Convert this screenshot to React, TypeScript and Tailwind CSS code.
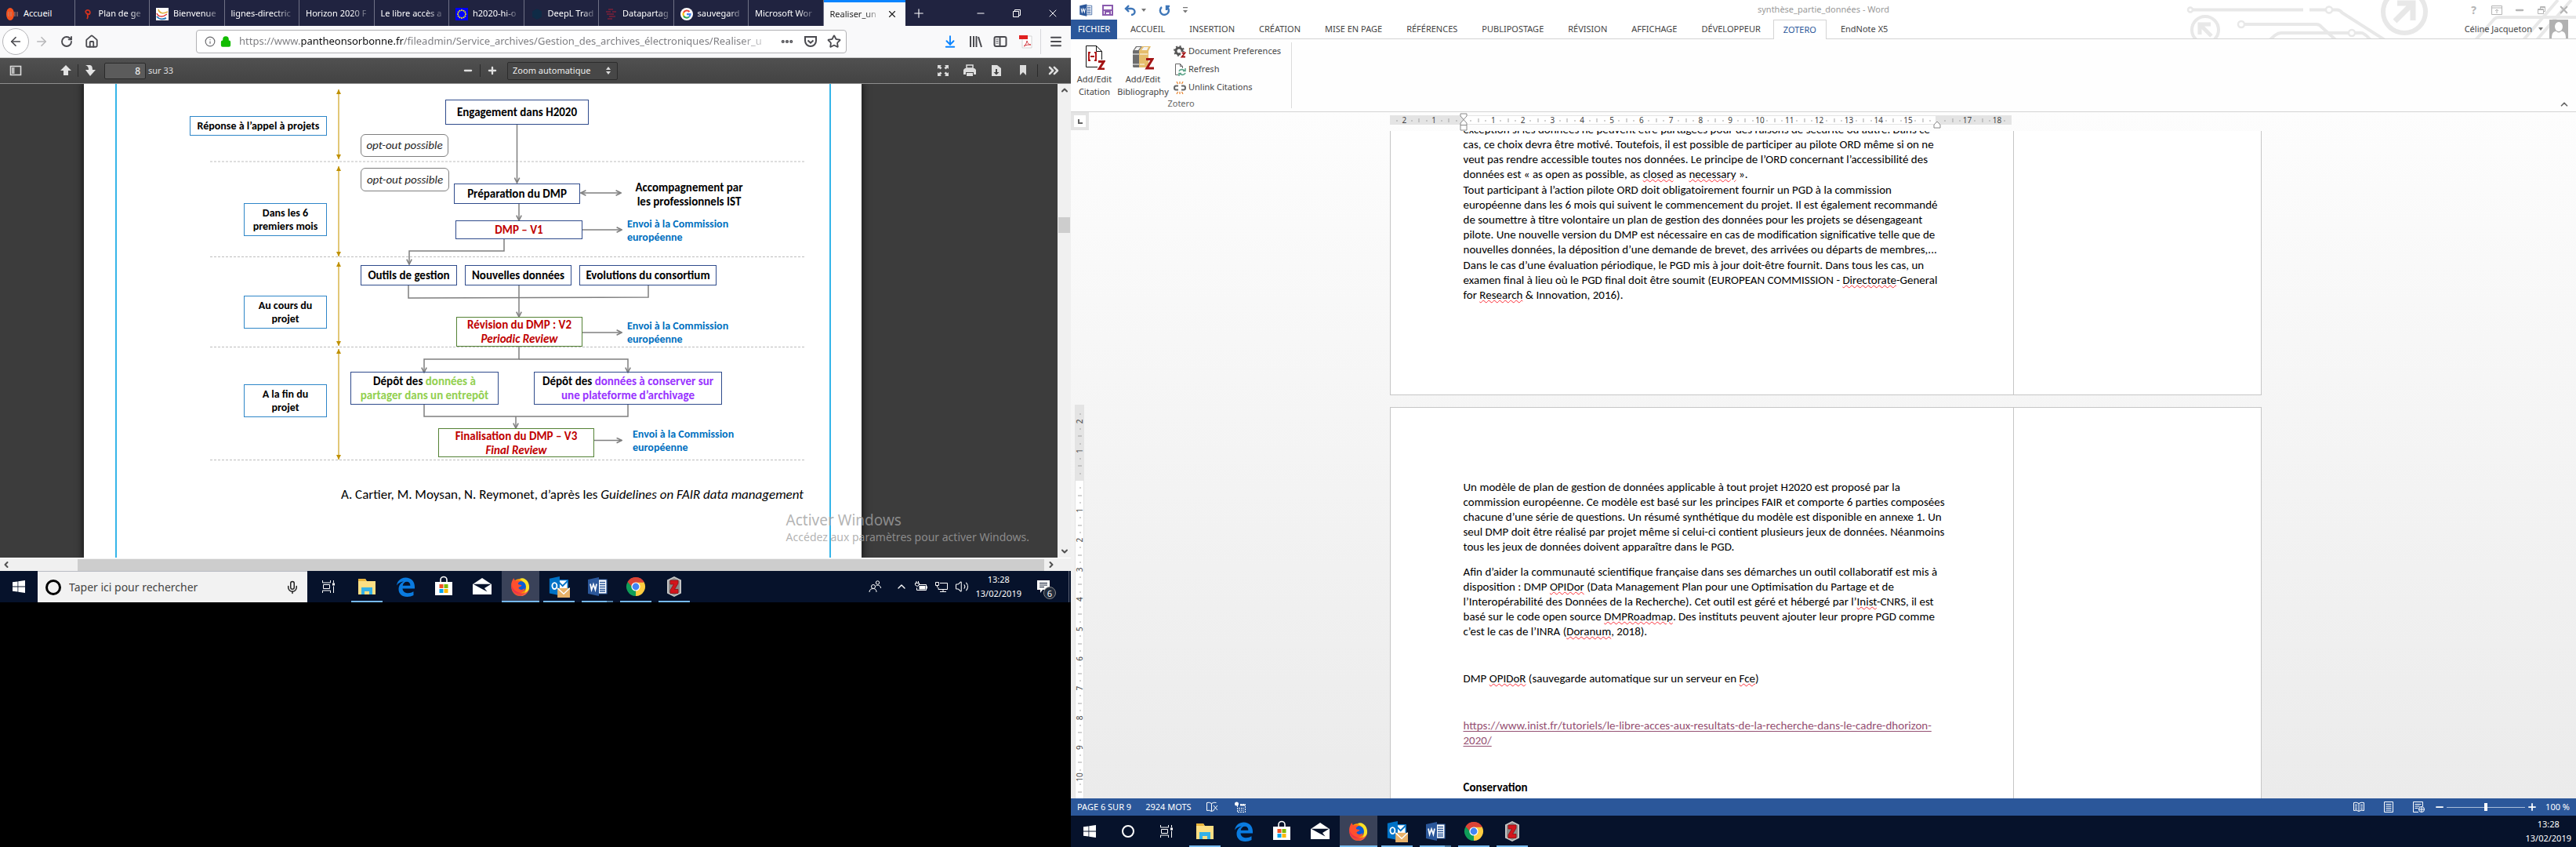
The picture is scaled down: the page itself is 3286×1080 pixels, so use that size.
import React from "react";
import {
  ArrowLeft, ArrowRight, RotateCw, Home, Info, Lock, Star, ArrowDownToLine, Menu, Plus, X, Minus, Copy,
  ChevronUp, ChevronDown, ChevronLeft, ChevronRight, ChevronsRight, Volume2, MoreHorizontal, Mic,
} from "lucide-react";

type Kids = { children?: React.ReactNode };

/* ---------- application logos ---------- */

function WordLogo({ className = "size-7" }: { className?: string }) {
  return (
    <svg viewBox="0 0 28 28" className={className} aria-hidden="true">
      <path d="M15 5h11v18H15z" fill="#fff" stroke="#2b579a" strokeWidth="1.2" />
      <path d="M17 8.500h7M17 11.500h7M17 14.500h7M17 17.500h7M17 20h7" stroke="#2b579a" strokeWidth="1.3" />
      <path d="M2 5l14-3v24L2 23z" fill="#2b579a" />
      <path d="M5 10.500l1.600 7.500 2.400-7 2.400 7 1.600-7.500" fill="none" stroke="#fff" strokeWidth="1.700" />
    </svg>
  );
}
function OutlookLogo() {
  return (
    <svg viewBox="0 0 30 30" className="size-7" aria-hidden="true">
      <path d="M14 6h13v14H14z" fill="#fff" stroke="#0072c6" strokeWidth="1.500" />
      <path d="M15 9l5 5 7-7" fill="none" stroke="#0072c6" strokeWidth="2" />
      <path d="M2 4l14-3v26L2 24z" fill="#0072c6" />
      <ellipse cx="9" cy="14" rx="3.200" ry="4.200" fill="none" stroke="#fff" strokeWidth="2" />
      <path d="M13 17h17v13H13z" fill="#e8b26a" />
      <path d="M13 17l8.500 8 8.500-8" fill="none" stroke="#fff" strokeWidth="1.500" />
    </svg>
  );
}
function ExplorerLogo() {
  return (
    <svg viewBox="0 0 28 28" className="size-7" aria-hidden="true">
      <path d="M3 4h9l2 3h11v17H3z" fill="#fddf83" />
      <path d="M3 4h9l1 3H3z" fill="#e9b53c" />
      <path d="M7 24v-9h14v9h-4v-4h-6v4z" fill="#35b1e8" />
    </svg>
  );
}
function EdgeLogo() {
  return (
    <svg viewBox="0 0 28 28" className="size-7" aria-hidden="true">
      <path
        d="M3 12.500C4 6 9 2.500 14.500 2.500 21.500 2.500 26 7.500 26 14v2.500H10.500c.3 4 3.500 5.800 7.300 5.800 2.500 0 4.700-.7 6.700-2v4.700c-2.200 1.300-5 2-8 2C9.500 27 5.500 23 5.500 17.300c0-4.800 2.800-8.300 6.500-9.800-3.800.2-7 2-9 5zm7.700.3h9.700c0-3-1.500-5-4.400-5-2.800 0-4.800 2-5.300 5z"
        fill="#0a7be0"
      />
    </svg>
  );
}
function StoreLogo() {
  return (
    <svg viewBox="0 0 28 28" className="size-7" aria-hidden="true">
      <path d="M10 9V5.500a4 4 0 0 1 8 0V9" fill="none" stroke="#fff" strokeWidth="1.600" />
      <path d="M3 8h22v17H3z" fill="#fff" />
      <path d="M8.500 11h5v5h-5z" fill="#f25022" />
      <path d="M14.500 11h5v5h-5z" fill="#7fba00" />
      <path d="M8.500 17h5v5h-5z" fill="#00a4ef" />
      <path d="M14.500 17h5v5h-5z" fill="#ffb900" />
    </svg>
  );
}
function MailLogo() {
  return (
    <svg viewBox="0 0 28 28" className="size-7" aria-hidden="true">
      <path d="M2 11l12-8 12 8v13H2z" fill="#fff" />
      <path d="M2.500 10.700h23L17 16l3.500 4.500L12 16z" fill="#06122b" />
    </svg>
  );
}
function FirefoxLogo() {
  return (
    <svg viewBox="0 0 28 28" className="size-7" aria-hidden="true">
      <circle cx="13.500" cy="15" r="11" fill="#ff9400" />
      <path d="M13 4c7-3 13 5 12 12-1 6-6 10-11 10 7-3 8-9 6-14-1-4-5-6-7-8z" fill="#ffe226" />
      <circle cx="14" cy="14" r="7" fill="#0a5bd6" />
      <path d="M2.500 9c1-3 2-5 3-6 0 2 1 3 3 3.500 2-.5 4 0 5 1-2 1-3 2-2.500 3.500 1.500 1 4 .5 4.500 1.500-1 2-4 1.500-4 3.500 2 3 6 2 8 0-1 5-5 7-9 6.500C4 22 1 15 2.500 9z" fill="#ff4f2e" />
      <path d="M2.300 12c-1 8 5 14 12 14 5 0 9-3 10.500-8-3 4-8 5.500-13 3.500S4 17 2.300 12z" fill="#e31f5b" opacity=".65" />
    </svg>
  );
}
function ChromeLogo() {
  return (
    <svg viewBox="0 0 28 28" className="size-7" aria-hidden="true">
      <path d="M14 14L3.600 8A12 12 0 0 1 24.400 8z" fill="#db4437" />
      <path d="M14 14L24.400 8A12 12 0 0 1 14 26z" fill="#ffcd40" />
      <path d="M14 14v12A12 12 0 0 1 3.600 8z" fill="#0f9d58" />
      <path d="M14 8.500h10.700L19 17z" fill="#ffcd40" />
      <path d="M14 8.500H3.900L9 17z" fill="#0f9d58" />
      <path d="M3.600 8L9 14l5-5.500h10.700A12 12 0 0 0 3.600 8z" fill="#db4437" />
      <circle cx="14" cy="14" r="5.600" fill="#fff" />
      <circle cx="14" cy="14" r="4.400" fill="#4285f4" />
    </svg>
  );
}
function ZoteroLogo() {
  return (
    <svg viewBox="0 0 28 28" className="size-7" aria-hidden="true">
      <path d="M14 1l9 4.500v17L14 27l-9-4.500v-17z" fill="#c4c4c4" />
      <path d="M14 3l7 3.500v15L14 25l-7-3.500v-15z" fill="#8a8a8a" />
      <path d="M9 6h10v4l-4.500 7.500H19v5H9v-4l4.500-7.500H9z" fill="#d3151d" stroke="#8f0c12" strokeWidth=".8" />
    </svg>
  );
}
function WindowsLogo() {
  return (
    <svg viewBox="0 0 16 16" className="size-4" aria-hidden="true">
      <path d="M0 2.300L6.500 1.400V7.500H0zM7.300 1.300L16 0v7.500H7.300zM0 8.400h6.500v6.200L0 13.700zM7.300 8.400H16V16l-8.700-1.200z" fill="#fff" />
    </svg>
  );
}
function TaskViewIcon() {
  return (
    <svg viewBox="0 0 18 18" className="size-[18px]" fill="none" stroke="#fff" aria-hidden="true">
      <path d="M1.500 1v3h10V1M1.500 17v-3h10v3M2.500 6.500h8v5h-8zM15.500 1v3M15.500 8.500V17" />
      <path d="M14 4.500h3v3h-3z" fill="#fff" stroke="none" />
    </svg>
  );
}

/* ---------- taskbar ---------- */

function TaskButton({ label, children, state = "idle" }: Kids & { label: string; state?: "idle" | "open" | "active" | "stack" }) {
  return (
    <button
      type="button"
      aria-label={label}
      className={`relative flex h-10 w-12 shrink-0 items-center justify-center ${state === "active" ? "bg-[#3a4259]" : ""}`}
    >
      {children}
      {state !== "idle" && (
        <span
          className={`absolute bottom-0 h-0.5 bg-[#76b9ed] ${state === "active" ? "inset-x-0" : "inset-x-1"} ${state === "stack" ? "border-r-8 border-[#4f7ea5]" : ""}`}
        />
      )}
    </button>
  );
}
function Apps() {
  return (
    <>
      <TaskButton label="Vue des tâches"><TaskViewIcon /></TaskButton>
      <TaskButton label="Explorateur de fichiers" state="open"><ExplorerLogo /></TaskButton>
      <TaskButton label="Microsoft Edge"><EdgeLogo /></TaskButton>
      <TaskButton label="Microsoft Store"><StoreLogo /></TaskButton>
      <TaskButton label="Courrier"><MailLogo /></TaskButton>
      <TaskButton label="Firefox" state="active"><FirefoxLogo /></TaskButton>
      <TaskButton label="Outlook" state="open"><OutlookLogo /></TaskButton>
      <TaskButton label="Word" state="stack"><WordLogo /></TaskButton>
      <TaskButton label="Google Chrome" state="open"><ChromeLogo /></TaskButton>
      <TaskButton label="Zotero" state="open"><ZoteroLogo /></TaskButton>
    </>
  );
}
function Clock() {
  return (
    <div className="text-center text-[11px] leading-[18px] text-white">
      <div>13:28</div>
      <div>13/02/2019</div>
    </div>
  );
}
function BrowserTaskbar() {
  return (
    <footer className="flex h-10 items-center gap-px bg-[#06122b]">
      <button type="button" aria-label="Démarrer" className="flex h-10 w-12 items-center justify-center"><WindowsLogo /></button>
      <label className="-ml-px flex h-10 w-[344px] items-center gap-2.5 border-t border-[#b9bcc4] bg-[#f2f2f2] px-2.5">
        <span className="size-5 rounded-full border-[3px] border-black" />
        <input
          type="text"
          aria-label="Rechercher"
          placeholder="Taper ici pour rechercher"
          className="min-w-0 flex-1 bg-transparent text-sm text-[#333] outline-none placeholder:text-[#444]"
        />
        <Mic className="size-[18px] text-[#222]" strokeWidth={2} />
      </label>
      <span className="w-px" />
      <Apps />
      <div className="ml-auto flex items-center gap-2 text-white">
        <svg viewBox="0 0 16 16" className="size-4" fill="none" stroke="#fff" aria-hidden="true">
          <circle cx="6" cy="8" r="2.500" /><path d="M1 15c0-3 2-4.500 5-4.500s4 2 4 4.500" /><circle cx="11.500" cy="3" r="2.200" /><path d="M9.500 7c3-2 6 0 6 3" />
        </svg>
        <ChevronUp className="ml-2.5 size-4" strokeWidth={2} />
        <svg viewBox="0 0 18 16" className="h-4 w-[18px]" fill="none" stroke="#fff" aria-hidden="true">
          <path d="M5.500 5.500h10v7h-12v-3M16.500 7.500v3M1.500 3.500h5v2.500l-2.500 1.500-2.500-1.500zM3 3.500V1M5.500 3.500V1" /><path d="M6.500 7h8v4.500h-8z" fill="#fff" stroke="none" />
        </svg>
        <svg viewBox="0 0 18 16" className="h-4 w-[18px]" fill="none" stroke="#fff" aria-hidden="true">
          <path d="M7 3.500h9.500v8H5V9M11 11.500v3M7 14.500h8M1.500 2.500h4v4h-4zM3.500 6.500V9" />
        </svg>
        <Volume2 className="size-[18px]" strokeWidth={1.4} />
        <Clock />
        <button type="button" aria-label="6 notifications" className="relative mr-1 h-10 w-10">
          <svg viewBox="0 0 20 20" className="ml-2.5 size-5" aria-hidden="true">
            <path d="M2 2h16v12H9l-3 4v-4H2z" fill="#fff" /><path d="M5 5.500h10M5 8h10M5 10.500h6" stroke="#06122b" />
          </svg>
          <span className="absolute right-1 bottom-1 flex size-4 items-center justify-center rounded-full border border-[#888] bg-[#222c3c] text-[11px] leading-none text-white">6</span>
        </button>
        <span className="h-10 w-[3px] border-l border-[#5b6374]" />
      </div>
    </footer>
  );
}
function WordTaskbar() {
  return (
    <footer className="flex h-10 items-center gap-px bg-[#06122b]">
      <button type="button" aria-label="Démarrer" className="flex h-10 w-12 items-center justify-center"><WindowsLogo /></button>
      <TaskButton label="Cortana"><span className="size-4 rounded-full border-2 border-white" /></TaskButton>
      <Apps />
      <div className="mr-1.5 ml-auto"><Clock /></div>
    </footer>
  );
}

/* ---------- browser ---------- */

const euStars = Array.from({ length: 12 }, (_, i) => [8 + 5 * Math.cos((i * Math.PI) / 6), 8 + 5 * Math.sin((i * Math.PI) / 6)]);

const tabs: { name: string; icon?: React.ReactNode }[] = [
  { name: "Accueil", icon: <svg viewBox="0 0 16 16"><ellipse cx="5" cy="8" rx="5" ry="8" fill="#f4511e" /><path d="M3 5v6M6 5v6M11 5v6M14 5v6" stroke="#b98a7a" /></svg> },
  { name: "Plan de ge", icon: <svg viewBox="0 0 16 16" fill="none" stroke="#d3321d" strokeWidth="1.800"><path d="M7 14c2-3 1-5 0-7M5 5a3 3 0 1 1 5 3c-2 0-4 0-5-3" /></svg> },
  { name: "Bienvenue", icon: <svg viewBox="0 0 16 16"><path d="M0 0h16v16H0z" fill="#fff" /><path d="M3 2c1 5 6 6 12 3" fill="none" stroke="#e0b13a" strokeWidth="1.500" /><path d="M1 7c2 5 8 5 13 1" fill="none" stroke="#d33" strokeWidth="1.500" /><path d="M1 11c3 4 8 4 12 2" fill="none" stroke="#2b7bb9" strokeWidth="2" /></svg> },
  { name: "lignes-directric" },
  { name: "Horizon 2020 F" },
  { name: "Le libre accès a" },
  { name: "h2020-hi-o", icon: <svg viewBox="0 0 16 16"><path d="M0 0h16v16H0z" fill="#00f" />{euStars.map(([x, y], i) => <circle key={i} cx={x} cy={y} r="1" fill="#ff0" />)}</svg> },
  { name: "DeepL Trad", icon: <svg viewBox="0 0 16 16"><path d="M8 1l6 3.500v7L8 15l-6-3.500v-7z" fill="#0f2b46" /></svg> },
  { name: "Datapartag", icon: <svg viewBox="0 0 16 16" stroke="#7c2038" strokeWidth="1.500"><path d="M4 2h6M1 5h6M9 5h5M2 8h9M5 11h8M3 14h6" /></svg> },
  { name: "sauvegard", icon: <svg viewBox="0 0 16 16"><circle cx="8" cy="8" r="8" fill="#fff" /><g fill="none" strokeWidth="2.200"><path d="M11.500 5A4.600 4.600 0 0 0 4 6" stroke="#ea4335" /><path d="M4 6a4.600 4.600 0 0 0 0 4.200" stroke="#fbbc05" /><path d="M4 10.200a4.600 4.600 0 0 0 7 1.300" stroke="#34a853" /><path d="M11 11.500a4.600 4.600 0 0 0 1.500-3.300H8" stroke="#4285f4" /></g></svg> },
  { name: "Microsoft Wor" },
];

function TabStrip() {
  return (
    <div className="flex h-[33px] bg-[#202340] text-[11px] text-white">
      <div className="flex w-[1155px] shrink" role="tablist">
        {tabs.map((t) => (
          <button key={t.name} type="button" role="tab" aria-selected="false" className="flex min-w-0 flex-1 basis-0 items-center gap-1.5 border-r border-[#6f7185] pt-0.5 pl-2 text-left">
            {t.icon && <span className="size-4 shrink-0">{t.icon}</span>}
            <span className={`whitespace-nowrap ${t.name === "Accueil" ? "" : "[mask-image:linear-gradient(to_right,black_75%,#0004)]"}`}>{t.name}</span>
          </button>
        ))}
        <div role="tab" aria-selected="true" className="flex min-w-0 flex-1 basis-0 items-center justify-between border-t-[3px] border-[#0a84ff] bg-[#f9f9fa] pr-2.5 pl-2 text-[#222]">
          <span className="whitespace-nowrap [mask-image:linear-gradient(to_right,black_75%,#0004)]">Realiser_un</span>
          <button type="button" aria-label="Fermer l’onglet"><X className="size-3.5" strokeWidth={2} /></button>
        </div>
      </div>
      <button type="button" aria-label="Nouvel onglet" className="px-2"><Plus className="size-[18px]" strokeWidth={1.5} /></button>
      <div className="ml-auto flex">
        <button type="button" aria-label="Réduire" className="flex w-[46px] items-center justify-center"><Minus className="size-3.5" strokeWidth={2} /></button>
        <button type="button" aria-label="Restaurer" className="flex w-[46px] items-center justify-center">
          <svg viewBox="0 0 10 10" className="size-2.5" fill="none" stroke="#fff"><path d="M.5 2.500h7v7h-7zM2.500 2.500v-2h7v7h-2" /></svg>
        </button>
        <button type="button" aria-label="Fermer" className="flex w-[46px] items-center justify-center"><X className="size-4" strokeWidth={1.5} /></button>
      </div>
    </div>
  );
}

function AddressBar() {
  return (
    <div className="flex h-[41px] items-center border-b border-[#ccc] bg-[#f9f9fa] pr-2.5 pl-[3px] text-[#4a4a4f]">
      <button type="button" aria-label="Page précédente" className="flex size-[34px] items-center justify-center rounded-full border border-[#b5b5b8] bg-white"><ArrowLeft className="size-[18px]" strokeWidth={2.3} /></button>
      <button type="button" aria-label="Page suivante" className="ml-1.5 flex w-5 justify-center text-[#b8b8ba]"><ArrowRight className="size-[18px]" strokeWidth={2.2} /></button>
      <button type="button" aria-label="Actualiser" className="ml-3 flex w-5 justify-center"><RotateCw className="size-4" strokeWidth={2.8} /></button>
      <button type="button" aria-label="Accueil" className="ml-3 flex w-5 justify-center"><Home className="size-[18px]" strokeWidth={2.4} /></button>
      <div className="relative ml-[123px] flex h-[30px] min-w-0 flex-1 items-center gap-1.5 rounded-sm border border-[#b1b1b4] bg-white px-2.5">
        <Info className="size-[14px] shrink-0 text-[#6a6a6e]" strokeWidth={2} />
        <Lock className="size-[14px] shrink-0 text-[#12bc00]" strokeWidth={3} fill="#12bc00" />
        <span className="ml-1 text-[13px] whitespace-nowrap text-[#808084] [mask-image:linear-gradient(to_right,black_96%,#0006)]">
          https://www.<span className="text-[#0c0c0d]">pantheonsorbonne.fr</span>/fileadmin/Service_archives/Gestion_des_archives_électroniques/Realiser_u
        </span>
        <input type="text" aria-label="Adresse" className="absolute inset-y-0 left-12 w-[660px] bg-transparent outline-none" />
        <div className="ml-auto flex items-center gap-3">
          <MoreHorizontal className="size-[18px]" strokeWidth={3.500} />
          <svg viewBox="0 0 18 18" className="size-[18px]" fill="none" stroke="#4a4a4f" strokeWidth="2" aria-hidden="true"><path d="M2 3h14v5a7 7 0 0 1-14 0z" /><path d="M5.500 7.500L9 10.700l3.500-3.200" /></svg>
          <Star className="-mr-1 size-[18px]" strokeWidth={2.400} />
        </div>
      </div>
      <div className="ml-[123px] flex items-center gap-3.5">
        <button type="button" aria-label="Téléchargements"><ArrowDownToLine className="size-[18px] text-[#0a84ff]" strokeWidth={2.500} /></button>
        <svg viewBox="0 0 18 18" className="size-[18px]" fill="none" stroke="#4a4a4f" strokeWidth="2" aria-hidden="true"><path d="M3 2v14M7 2v14M10.500 2v14M13 3l4 13" /></svg>
        <svg viewBox="0 0 18 18" className="size-[18px]" fill="none" stroke="#4a4a4f" strokeWidth="2" aria-hidden="true"><rect x="1.500" y="3" width="15" height="12" rx="2" /><path d="M8.500 3v12" /><path d="M3.500 6h3M3.500 8.500h3M3.500 11h3" strokeWidth="1.200" /></svg>
        <svg viewBox="0 0 18 18" className="size-[18px]" aria-hidden="true"><path d="M5 2h12v15H5z" fill="#fff" stroke="#d5d5d5" /><path d="M1 1h11v5H1z" fill="#e02020" /><path d="M7 15c3-2 4-6 4-7 1 4 3 5 5 5-3 0-6 0-9 2z" fill="none" stroke="#d0323a" /></svg>
        <span className="-ml-1 h-8 border-l border-[#d7d7db]" />
        <button type="button" aria-label="Menu"><Menu className="-ml-1 size-[18px]" strokeWidth={2.600} /></button>
      </div>
    </div>
  );
}

function PdfToolbar() {
  return (
    <div className="flex h-[33px] items-center border-b border-[#8d8d8d] bg-linear-to-b from-[#505050] to-[#434343] text-[11px] text-[#e0e0e0]">
      <button type="button" aria-label="Panneau latéral" className="ml-3 flex w-4 justify-center">
        <svg viewBox="0 0 16 16" className="size-4"><path d="M1.500 2.500h13v11h-13z" fill="none" stroke="#ddd" strokeWidth="1.600" /><path d="M3 4h3.500v8H3z" fill="#bbb" /></svg>
      </button>
      <button type="button" aria-label="Page précédente" className="ml-[48px] flex w-4 justify-center"><svg viewBox="0 0 16 16" className="size-4"><path d="M8 1l7 7h-4v6H5V8H1z" fill="#e3e3e3" /></svg></button>
      <span className="mx-[7px] h-4 border-l border-[#2b2b2b]" />
      <button type="button" aria-label="Page suivante" className="flex w-4 justify-center"><svg viewBox="0 0 16 16" className="size-4"><path d="M2 1h5c3 0 4 2 4 6h4l-7 8-6-8h4c0-3-1-5-4-6z" fill="#e3e3e3" /></svg></button>
      <input type="text" aria-label="Page" defaultValue="8" className="ml-2.5 h-[21px] w-[53px] rounded-xs border border-[#2a2a2a] bg-[#5b5b5b] px-1.5 text-right text-xs text-white" />
      <span className="ml-[3px]">sur 33</span>
      <div className="ml-[369px] flex items-center">
        <button type="button" aria-label="Zoom arrière"><Minus className="size-3.5" strokeWidth={4} /></button>
        <span className="mx-2 h-4 border-l border-[#2b2b2b]" />
        <button type="button" aria-label="Zoom avant"><Plus className="size-3.5" strokeWidth={4} /></button>
        <label className="relative ml-3 block">
          <select aria-label="Zoom" className="h-[23px] w-[141px] appearance-none rounded-xs border border-[#2c2c2c] bg-[#474747] pl-1.5 text-[11px] text-[#eee]">
            <option>Zoom automatique</option>
          </select>
          <svg viewBox="0 0 8 10" className="absolute top-1.5 right-2 h-2.5 w-2"><path d="M4 0l3 4H1zM4 10L1 6h6z" fill="#ddd" /></svg>
        </label>
      </div>
      <div className="mr-3 ml-auto flex items-center gap-[18px]">
        <svg viewBox="0 0 16 16" className="size-4"><path d="M1 1h5L4.500 2.500l2 2-2 2-2-2L1 6zM15 1v5l-1.500-1.500-2 2-2-2 2-2L10 1zM1 15v-5l1.500 1.500 2-2 2 2-2 2L6 15zM15 15h-5l1.500-1.500-2-2 2-2 2 2L15 10z" fill="#ddd" /></svg>
        <svg viewBox="0 0 16 16" className="size-4"><path d="M4 1h8v4H4z" fill="none" stroke="#ddd" strokeWidth="1.500" /><path d="M0 7l2-2h12l2 2v6h-3v-3H3v3H0zM4 11h8v4H4z" fill="#ddd" /></svg>
        <svg viewBox="0 0 16 16" className="size-4"><path d="M2 1h7l5 4v10H2z" fill="#ddd" /><path d="M7 6h2v4h2.500L8 13.500 4.500 10H7z" fill="#444" /></svg>
        <svg viewBox="0 0 16 16" className="size-4"><path d="M4 1h8v13l-4-4-4 4z" fill="#ddd" /></svg>
        <span className="-ml-2 h-4 border-l border-[#2b2b2b]" />
        <button type="button" aria-label="Outils"><ChevronsRight className="-ml-2 size-5" strokeWidth={3} /></button>
      </div>
    </div>
  );
}

/* ---------- funding timeline diagram ---------- */

function Node({ at, children }: Kids & { at: string }) {
  return <div className={`absolute flex items-center justify-center border text-center font-bold whitespace-nowrap ${at}`}>{children}</div>;
}
const phase = "border-[#2e86c8] text-sm leading-[17px]";
const step = "border-[#2f4b8c] text-[15px] leading-[18px]";
const review = "border-[#548235] text-[15px] leading-[18px] text-[#c00000]";
const send = "absolute text-sm leading-[17px] font-bold text-[#0070c0]";

function DiagramLines() {
  return (
    <svg viewBox="107 107 992 604" className="absolute inset-0 h-[604px] w-[992px]" fill="none" aria-hidden="true">
      <defs>
        <marker id="open" viewBox="0 0 10 10" refX="9" refY="5" markerWidth="8" markerHeight="8" markerUnits="userSpaceOnUse" orient="auto-start-reverse"><path d="M1 1l8 4-8 4" fill="none" stroke="#7f7f7f" strokeWidth="2" /></marker>
        <marker id="gold" viewBox="0 0 6 6" refX="6" refY="3" markerWidth="6" markerHeight="6" markerUnits="userSpaceOnUse" orient="auto-start-reverse"><path d="M0 0l6 3-6 3z" fill="#bf9000" /></marker>
      </defs>
      <path d="M148 107v604M1059 107v604" stroke="#35b5e9" strokeWidth="2" />
      <path d="M268 206h759M268 327.500h759M268 442.500h759M268 586.500h759" stroke="#bdbdbd" strokeDasharray="3 2" />
      <g stroke="#d9b44a" strokeWidth="1.500" markerStart="url(#gold)" markerEnd="url(#gold)">
        <path d="M432 114v89" /><path d="M432 212v115" /><path d="M432 334v107" /><path d="M432 445v141" />
      </g>
      <g stroke="#7f7f7f" strokeWidth="1.500">
        <path d="M659.500 159v74" markerEnd="url(#open)" />
        <path d="M741 246h51" markerStart="url(#open)" markerEnd="url(#open)" />
        <path d="M662 260v21" markerEnd="url(#open)" />
        <path d="M743 293h50" markerEnd="url(#open)" />
        <path d="M643 305v15H522v17" markerEnd="url(#open)" />
        <path d="M521 364v16l306-1v-15" />
        <path d="M662 364v40" markerEnd="url(#open)" />
        <path d="M743 424h50" markerEnd="url(#open)" />
        <path d="M662 442v16H541v17" markerEnd="url(#open)" />
        <path d="M662 458h139v17" markerEnd="url(#open)" />
        <path d="M541 516v15h260v-15" />
        <path d="M658 531v15" markerEnd="url(#open)" />
        <path d="M758 561.500h35" markerEnd="url(#open)" />
      </g>
    </svg>
  );
}

function Diagram() {
  return (
    <article className="relative ml-[107px] h-[604px] w-[992px] shrink-0 bg-white text-black shadow-[0_0_8px_2px_#1a1a1a] [font-family:Carlito,Lato,sans-serif]">
      <DiagramLines />
      <Node at={`${phase} top-[41px] left-[135px] h-[25px] w-[175px]`}>Réponse à l’appel à projets</Node>
      <Node at={`${phase} top-[152px] left-[204px] h-[42px] w-[106px]`}>Dans les 6<br />premiers mois</Node>
      <Node at={`${phase} top-[270px] left-[204px] h-[42px] w-[106px]`}>Au cours du<br />projet</Node>
      <Node at={`${phase} top-[383px] left-[204px] h-[42px] w-[106px]`}>A la fin du<br />projet</Node>

      <div className="absolute top-[64px] left-[353px] flex h-[29px] w-[112px] items-center justify-center rounded-md border border-[#7f7f7f] text-[15px] text-[#262626] italic">opt-out possible</div>
      <div className="absolute top-[107px] left-[353px] flex h-[30px] w-[113px] items-center justify-center rounded-md border border-[#7f7f7f] text-[15px] text-[#262626] italic">opt-out possible</div>

      <Node at={`${step} top-[20px] left-[461px] h-[32px] w-[183px]`}>Engagement dans H2020</Node>
      <Node at={`${step} top-[127px] left-[472px] h-[26px] w-[161px]`}>Préparation du DMP</Node>
      <Node at={`${step} top-[174px] left-[474px] h-[24px] w-[162px]`}><span className="text-[#c00000]">DMP – V1</span></Node>
      <Node at={`${step} top-[231px] left-[353px] h-[26px] w-[123px]`}>Outils de gestion</Node>
      <Node at={`${step} top-[231px] left-[486px] h-[26px] w-[136px]`}>Nouvelles données</Node>
      <Node at={`${step} top-[231px] left-[632px] h-[26px] w-[175px]`}>Evolutions du consortium</Node>
      <Node at={`${review} top-[297px] left-[475px] h-[38px] w-[161px]`}><span>Révision du DMP : V2<br /><i>Periodic Review</i></span></Node>
      <Node at={`${step} top-[367px] left-[340px] h-[42px] w-[189px]`}>
        <span>Dépôt des <span className="text-[#92d050]">données à<br />partager dans un entrepôt</span></span>
      </Node>
      <Node at={`${step} top-[367px] left-[574px] h-[42px] w-[240px]`}>
        <span>Dépôt des <span className="text-[#9933ff]">données à conserver sur<br />une plateforme d’archivage</span></span>
      </Node>
      <Node at={`${review} top-[439px] left-[452px] h-[37px] w-[199px]`}><span>Finalisation du DMP – V3<br /><i>Final Review</i></span></Node>

      <p className="absolute top-[123px] left-[692px] w-[160px] text-center text-[15px] leading-[18px] font-bold">Accompagnement par<br />les professionnels IST</p>
      <p className={`${send} top-[170px] left-[693px]`}>Envoi à la Commission<br />européenne</p>
      <p className={`${send} top-[300px] left-[693px]`}>Envoi à la Commission<br />européenne</p>
      <p className={`${send} top-[438px] left-[700px]`}>Envoi à la Commission<br />européenne</p>
      <p className="absolute top-[514px] left-[328px] text-[17px] leading-5 whitespace-nowrap">
        A. Cartier, M. Moysan, N. Reymonet, d’après les <i>Guidelines on FAIR data management</i>
      </p>
    </article>
  );
}

function BrowserScreen() {
  return (
    <section className="flex min-w-0 flex-col">
      <TabStrip />
      <AddressBar />
      <PdfToolbar />
      <div className="relative flex bg-[#3c3c3c]">
        <div className="min-w-0 flex-1 overflow-hidden"><Diagram /></div>
        <div className="flex w-[17px] flex-col items-center bg-[#f0f0f0] text-[#505050]">
          <ChevronUp className="mt-0.5 size-3" strokeWidth={4} />
          <div className="mt-[156px] h-5 w-[15px] bg-[#cdcdcd]" />
          <ChevronDown className="mt-auto mb-0.5 size-3" strokeWidth={4} />
        </div>
        <div className="absolute right-[53px] bottom-4 text-[#a0a0a0]/80">
          <p className="text-[19px] leading-6">Activer Windows</p>
          <p className="text-sm leading-5">Accédez aux paramètres pour activer Windows.</p>
        </div>
      </div>
      <div className="flex h-[17px] items-center border-t border-white bg-[#f0f0f0] text-[#505050]">
        <ChevronLeft className="ml-0.5 size-3" strokeWidth={4} />
        <div className="ml-[85px] h-[15px] flex-1 bg-[#cdcdcd]" />
        <ChevronRight className="mx-[3px] size-3" strokeWidth={4} />
        <div className="w-4" />
      </div>
      <BrowserTaskbar />
    </section>
  );
}

/* ---------- word processor ---------- */

function TitleArt() {
  return (
    <svg viewBox="0 0 501 49" className="absolute top-0 right-0 h-[49px] w-[501px]" fill="none" stroke="#e8e8e8" strokeWidth="4" aria-hidden="true">
      <path d="M12 12.500h141M161 12.500h35q4 0 7 4L262 54M78 31h92q4 0 7 4l22 20M109 52l8-7q4-3 8-3h86M219 42h8q4 0 12 9M372 52l25-28q2-2 6-2h98M433 52L478 0M450 52L495 0" />
      <circle cx="9" cy="12.500" r="3" strokeWidth="2.500" /><circle cx="186" cy="12.500" r="4" strokeWidth="2.500" fill="#fff" /><circle cx="74" cy="31" r="4" strokeWidth="2.500" /><circle cx="215" cy="42" r="4" strokeWidth="2.500" fill="#fff" />
      <circle cx="28" cy="38" r="17" /><circle cx="282" cy="15" r="27" strokeWidth="6" />
      <path d="M36 46L22 32M21 44V31h14" strokeWidth="5" /><path d="M270 27l22-22M273 4h20v22" strokeWidth="7" />
    </svg>
  );
}

const ribbonTabs = ["ACCUEIL", "INSERTION", "CRÉATION", "MISE EN PAGE", "RÉFÉRENCES", "PUBLIPOSTAGE", "RÉVISION", "AFFICHAGE", "DÉVELOPPEUR"];

function Caret({ className = "" }: { className?: string }) {
  return <svg viewBox="0 0 6 4" className={`h-1 w-1.5 ${className}`} aria-hidden="true"><path d="M0 0h6L3 4z" fill="#777" /></svg>;
}

function WordHeader() {
  return (
    <header className="relative border-b border-[#d4d4d4] bg-white">
      <TitleArt />
      <div className="relative grid h-[25px] grid-cols-[1fr_auto_1fr] items-center">
        <div className="flex items-center pl-2.5">
          <WordLogo className="size-[18px]" />
          <button type="button" aria-label="Enregistrer" className="ml-3"><svg viewBox="0 0 14 14" className="size-3.5"><path d="M1 1h12v12H1zM4 13V9h6v4M1 7h12" fill="none" stroke="#8a5aae" strokeWidth="2" /></svg></button>
          <button type="button" aria-label="Annuler" className="ml-3.5"><svg viewBox="0 0 16 14" className="h-3.5 w-4" fill="none" stroke="#3e76b8" strokeWidth="2.400"><path d="M6 1L2 5l4 4M2 5h7c6 0 6 8 0 8" /></svg></button>
          <Caret className="ml-1.5" />
          <button type="button" aria-label="Rétablir" className="ml-4"><svg viewBox="0 0 14 14" className="size-3.5" fill="none" stroke="#3e76b8" strokeWidth="2.400"><path d="M4 3a5.500 5.500 0 1 0 6-.5M10 7V2h4" /></svg></button>
          <svg viewBox="0 0 8 8" className="ml-4 size-2"><path d="M1 0h6v1.200H1zM1 4h6L4 7.500z" fill="#777" /></svg>
        </div>
        <h1 className="text-[11px] text-[#999]">synthèse_partie_données - Word</h1>
        <div className="flex items-center justify-end gap-[15px] pr-2 text-[#b5b5b5]">
          <button type="button" aria-label="Aide" className="mr-1 text-sm leading-none font-bold">?</button>
          <svg viewBox="0 0 14 12" className="h-3 w-3.5" fill="none" stroke="#b5b5b5"><path d="M.5.500h13v11H.5zM.5 3h13M7 10V5M5 7l2-2 2 2" /></svg>
          <Minus className="size-3.5" strokeWidth={4} />
          <svg viewBox="0 0 12 12" className="size-3" fill="none" stroke="#b5b5b5"><path d="M1.500 4.500h7v6h-7zM1.500 5.500h7M4.500 4v-2.500h6v6H9M4.500 2.500h6" /></svg>
          <X className="size-[15px]" strokeWidth={3.500} />
        </div>
      </div>
      <nav className="relative -mb-px flex h-[25px] items-stretch text-[11px] text-[#444]">
        <a href="#fichier" className="flex w-[59px] items-center justify-center bg-[#2b579a] text-white">FICHIER</a>
        <div className="ml-[17px] flex items-center gap-[31px]">
          {ribbonTabs.map((t) => <a key={t} href="#ruban">{t}</a>)}
        </div>
        <a href="#zotero" className="ml-4 flex items-center border border-b-0 border-[#d4d4d4] bg-white px-3 text-[#2b579a]">ZOTERO</a>
        <a href="#endnote" className="ml-[18px] flex items-center">EndNote X5</a>
        <div className="mr-2.5 ml-auto flex items-center gap-2 pb-px">
          <span>Céline Jacqueton</span>
          <Caret />
          <svg viewBox="0 0 24 24" className="size-6" aria-hidden="true"><path d="M0 0h24v24H0z" fill="#b1b1b1" /><ellipse cx="12" cy="9" rx="5" ry="6" fill="#fff" /><path d="M3 24c0-7 2-9 6-9 2 2 4 2 6 0 4 0 6 2 6 9z" fill="#fff" /></svg>
        </div>
      </nav>
    </header>
  );
}

function ZMark({ d }: { d: string }) {
  return <path d={d} fill="none" stroke="#a31515" strokeWidth="3" />;
}

function Ribbon() {
  return (
    <div className="flex h-[93px] border-b border-[#d4d4d4] bg-[#fefefe] text-[11px] text-[#444]">
      <div className="my-1 flex w-[282px] flex-col border-r border-[#dcdcdc]">
        <div className="flex flex-1">
          <button type="button" className="flex w-[60px] flex-col items-center pt-[3px] leading-4">
            <svg viewBox="0 0 28 32" className="mb-1 h-8 w-7"><path d="M3.500 1.500h13l7 7v20h-20zM16.500 1.500v7h7" fill="#fff" stroke="#111" /><path d="M9 10H7v10h2M14 10h2v10h-2M9 15h5" fill="none" stroke="#a00" strokeWidth="1.800" /><path d="M18 19h10v13H18z" fill="#fff" /><ZMark d="M19 21.500h7L20 31h7" /></svg>
            Add/Edit<br />Citation
          </button>
          <button type="button" className="flex w-[64px] flex-col items-center pt-[3px] leading-4">
            <svg viewBox="0 0 28 32" className="mb-1 h-8 w-7"><path d="M1 8l4-6h8l-4 6v21H2q-1 0-1-2z" fill="#6d6d6d" /><path d="M9 8l4-6h11l-3 6v21H9z" fill="#e5bd6c" /><path d="M3 7l3-4h5L8 7zM12 7l3-4h6l-2 4z" fill="#f4f4f4" /><path d="M1 12h8M1 25h8M10 12h10M10 25h6" stroke="#fff" /><ZMark d="M18 18.500h8L19 30h9" /></svg>
            Add/Edit<br /><span className="whitespace-nowrap">Bibliography</span>
          </button>
          <div className="flex flex-col pl-[7px]">
            <button type="button" className="flex h-[23px] items-center gap-[3px] whitespace-nowrap">
              <svg viewBox="0 0 16 16" className="size-4"><circle cx="7" cy="7" r="4" fill="none" stroke="#555" strokeWidth="3" /><circle cx="7" cy="7" r="6" fill="none" stroke="#555" strokeWidth="2" strokeDasharray="2 2.700" /><path d="M9 8h7v8H9z" fill="#fff" /><path d="M10.500 9.500h4l-4 5h4.500" fill="none" stroke="#a31515" strokeWidth="1.800" /></svg>
              Document Preferences
            </button>
            <button type="button" className="flex h-[23px] items-center gap-[3px]">
              <svg viewBox="0 0 16 16" className="size-4"><path d="M6 14.500H2.500v-14h6l3 3V6M8.500.500v3h3" fill="none" stroke="#666" /><path d="M7 10c1-3 5-3 7-1M15 6v3.500h-3M15 12c-1 3-5 3-7 1M7 16v-3.500h3" fill="none" stroke="#5fa58b" strokeWidth="1.600" /></svg>
              Refresh
            </button>
            <button type="button" className="flex h-[23px] items-center gap-[3px]">
              <svg viewBox="0 0 16 16" className="size-4" fill="none"><path d="M6 5.500H3q-2 0-2 2.500t2 2.500h3M10 5.500h3q2 0 2 2.500t-2 2.500h-3" stroke="#666" strokeWidth="2" /><path d="M8 0v3M4 0l1.500 3M12 0l-1.500 3M8 16v-3M4 16l1.500-3M12 16l-1.500-3" stroke="#e8822a" strokeWidth="1.200" /></svg>
              Unlink Citations
            </button>
          </div>
        </div>
        <div className="text-center leading-3 text-[#666]">Zotero</div>
      </div>
      <button type="button" aria-label="Réduire le ruban" className="mt-auto mr-2 mb-0.5 ml-auto"><ChevronUp className="size-3.5 text-[#666]" strokeWidth={3} /></button>
    </div>
  );
}

const CM = 37.8;
const ZERO_X = 94;
const ZERO_Y = 97;
const quarters = (from: number, to: number) => Array.from({ length: to - from + 1 }, (_, i) => from + i).filter((q) => q % 4 !== 0);

function HorizontalRuler() {
  return (
    <svg viewBox="0 0 795 24" className="relative h-6 w-[795px] overflow-visible" aria-hidden="true">
      <path d="M0 4h793v12H0z" fill="#e4e4e4" />
      <path d="M94 5h602v10H94z" fill="#fff" />
      {quarters(-9, 73).map((q) => {
        const x = Math.round(ZERO_X + (q * CM) / 4);
        return <path key={q} d={q % 2 === 0 ? `M${x} 8v5` : `M${x} 10v2`} stroke="#a3a3a3" />;
      })}
      {[-2, -1, ...Array.from({ length: 15 }, (_, i) => i + 1), 17, 18].map((n) => (
        <text key={n} x={ZERO_X + n * CM} y="14" textAnchor="middle" fontSize="10" fill="#444">{Math.abs(n)}</text>
      ))}
      <path d="M90 2h8v3l-4 4.500 4 4.500v9h-8v-9l4-4.500-4-4.500zM90 16.500h8" fill="#fff" stroke="#888" />
      <path d="M694 20v-4l4-4 4 4v4z" fill="#fff" stroke="#888" />
    </svg>
  );
}

function VerticalRuler() {
  return (
    <svg viewBox="0 0 12 502" className="h-[502px] w-3 shrink-0" aria-hidden="true">
      <path d="M0 0h12v502H0z" fill="#e4e4e4" />
      <path d="M1 97h10v405H1z" fill="#fff" />
      {quarters(-9, 42).map((q) => {
        const y = Math.round(ZERO_Y + (q * CM) / 4);
        return <path key={q} d={q % 2 === 0 ? `M4 ${y}h5` : `M6 ${y}h2`} stroke="#a3a3a3" />;
      })}
      {[-2, -1, 1, 2, 3, 4, 5, 6, 7, 8, 9, 10].map((n) => {
        const y = ZERO_Y + n * CM;
        return <text key={n} x="6" y={y + 4} textAnchor="middle" fontSize="10" fill="#444" transform={`rotate(-90 6 ${y})`}>{Math.abs(n)}</text>;
      })}
    </svg>
  );
}

function Sp({ children }: Kids) {
  return <span className="underline decoration-red-500 decoration-wavy decoration-1 underline-offset-1">{children}</span>;
}

function DocumentArea() {
  return (
    <main className="flex min-h-0 flex-1 flex-col bg-linear-to-b from-[#fdfdfd] to-[#ebebeb]">
      <div className="flex h-6">
        <div className="flex size-[23px] items-center justify-center border-4 border-[#e4e4e4] bg-white">
          <svg viewBox="0 0 6 6" className="size-1.5"><path d="M1 0v5h5" fill="none" stroke="#666" strokeWidth="2" /></svg>
        </div>
        <div className="flex flex-1 justify-center pr-[18px]">
          <div className="w-[1112px]"><HorizontalRuler /></div>
        </div>
      </div>
      <div className="flex h-[851px] overflow-hidden">
        <div className="w-[17px] pt-[349px] pl-[5px]"><VerticalRuler /></div>
        <div className="flex flex-1 flex-col items-center gap-[15px] pr-3 text-[15px] leading-[19px] whitespace-nowrap text-black [font-family:Carlito,Lato,sans-serif]">
          <article className="flex h-[337px] w-[1112px] shrink-0 overflow-hidden border border-t-0 border-[#c6c6c6] bg-white">
            <div className="-mt-[11px] w-[795px] border-r border-[#c6c6c6] pl-[93px]">
              <p>
                exception si les données ne peuvent être partagées pour des raisons de sécurité ou autre. Dans ce<br />
                cas, ce choix devra être motivé. Toutefois, il est possible de participer au pilote ORD même si on ne<br />
                veut pas rendre accessible toutes nos données. Le principe de l’ORD concernant l’accessibilité des<br />
                données est « as open as possible, as <Sp>closed</Sp> as <Sp>necessary</Sp> ».
              </p>
              <p className="mt-px">
                Tout participant à l’action pilote ORD doit obligatoirement fournir un PGD à la commission<br />
                européenne dans les 6 mois qui suivent le commencement du projet. Il est également recommandé<br />
                de soumettre à titre volontaire un plan de gestion des données pour les projets se désengageant<br />
                pilote. Une nouvelle version du DMP est nécessaire en cas de modification significative telle que de<br />
                nouvelles données, la déposition d’une demande de brevet, des arrivées ou départs de membres,...
              </p>
              <p className="mt-px">
                Dans le cas d’une évaluation périodique, le PGD mis à jour doit-être fournit. Dans tous les cas, un<br />
                examen final à lieu où le PGD final doit être soumit (EUROPEAN COMMISSION - <Sp>Directorate</Sp>-General<br />
                for <Sp>Research</Sp> &amp; Innovation, 2016).
              </p>
            </div>
          </article>
          <article className="flex h-[499px] w-[1112px] shrink-0 border border-b-0 border-[#c6c6c6] bg-white">
            <div className="w-[795px] border-r border-[#c6c6c6] pt-[92px] pl-[93px]">
              <p>
                Un modèle de plan de gestion de données applicable à tout projet H2020 est proposé par la<br />
                commission européenne. Ce modèle est basé sur les principes FAIR et comporte 6 parties composées<br />
                chacune d’une série de questions. Un résumé synthétique du modèle est disponible en annexe 1. Un<br />
                seul DMP doit être réalisé par projet même si celui-ci contient plusieurs jeux de données. Néanmoins<br />
                tous les jeux de données doivent apparaître dans le PGD.
              </p>
              <p className="mt-[13px]">
                Afin d’aider la communauté scientifique française dans ses démarches un outil collaboratif est mis à<br />
                disposition : DMP <Sp>OPIDor</Sp> (Data Management Plan pour une Optimisation du Partage et de<br />
                l’Interopérabilité des Données de la Recherche). Cet outil est géré et hébergé par l’<Sp>Inist</Sp>-CNRS, il est<br />
                basé sur le code open source <Sp>DMPRoadmap</Sp>. Des instituts peuvent ajouter leur propre PGD comme<br />
                c’est le cas de l’INRA (<Sp>Doranum</Sp>, 2018).
              </p>
              <p className="mt-[41px]">DMP <Sp>OPIDoR</Sp> (sauvegarde automatique sur un serveur en <Sp>Fce</Sp>)</p>
              <p className="mt-[41px]">
                <a href="#inist" className="text-[#954f72] underline underline-offset-2">
                  https://www.inist.fr/tutoriels/le-libre-acces-aux-resultats-de-la-recherche-dans-le-cadre-dhorizon-<br />2020/
                </a>
              </p>
              <h2 className="mt-[41px] font-bold">Conservation</h2>
            </div>
          </article>
        </div>
      </div>
    </main>
  );
}

function StatusBar() {
  return (
    <div className="flex h-[22px] items-center bg-[#2b579a] px-2 text-[11px] text-white">
      <span>PAGE 6 SUR 9</span>
      <span className="ml-[18px]">2924 MOTS</span>
      <svg viewBox="0 0 16 14" className="ml-[18px] h-3.5 w-4" fill="none" stroke="#fff"><path d="M7.500 2.500q-3-2-6-1v10q3-1 6 1zM7.500 2.500q3-2 6-1M7.500 12.500q2-1 3-1M10 5l5 6M15 5l-5 6" /></svg>
      <svg viewBox="0 0 16 14" className="ml-5 h-3.5 w-4" fill="none" stroke="#fff"><path d="M4.500 5v8.500h10v-10H8M6 8.500h7M6 11h7" strokeDasharray="2 1" /><circle cx="3.500" cy="3" r="2.500" fill="#fff" stroke="none" /><path d="M8 4.500h6" strokeWidth="2" /></svg>
      <div className="ml-auto flex items-center">
        <svg viewBox="0 0 16 14" className="h-3.5 w-4" fill="none" stroke="#fff"><path d="M8 2.500q-3-2-6.500-1v10q3.500-1 6.500 1 3-2 6.500-1v-10q-3.500-1-6.500 1zV12M3 4.500h3M3 7h3M3 9.500h3M10 4.500h3M10 7h3M10 9.500h3" /></svg>
        <svg viewBox="0 0 16 14" className="ml-[22px] h-3.5 w-4" fill="none" stroke="#fff"><path d="M2.500.500h11v13h-11zM4.500 3.500h7M4.500 6h7M4.500 8.500h7M4.500 11h7" /></svg>
        <svg viewBox="0 0 16 14" className="ml-[22px] h-3.5 w-4" fill="none" stroke="#fff"><path d="M8 13.500H1.500V.500h12V6M3.500 3.500h8M3.500 6h6M3.500 8.500h4" /><circle cx="12" cy="10" r="3.500" fill="#2b579a" /><path d="M8.500 10h7M12 6.500v7" /></svg>
        <Minus className="ml-3 size-3.5" strokeWidth={3} />
        <input
          type="range"
          aria-label="Niveau de zoom"
          defaultValue={50}
          className="mx-0.5 h-3 w-[100px] appearance-none bg-[linear-gradient(#a9bcd8,#a9bcd8)] bg-[length:100%_1px] bg-center bg-no-repeat [&::-webkit-slider-thumb]:h-2.5 [&::-webkit-slider-thumb]:w-1 [&::-webkit-slider-thumb]:appearance-none [&::-webkit-slider-thumb]:bg-white"
        />
        <Plus className="size-3.5" strokeWidth={3} />
        <span className="ml-2.5">100 %</span>
      </div>
    </div>
  );
}

function WordScreen() {
  return (
    <section className="flex min-w-0 flex-col">
      <WordHeader />
      <Ribbon />
      <DocumentArea />
      <StatusBar />
      <WordTaskbar />
    </section>
  );
}

export default function App() {
  return (
    <div className="grid min-h-screen grid-cols-[1366fr_1920fr] items-start bg-black [font-family:'Noto_Sans','Open_Sans',sans-serif]">
      <BrowserScreen />
      <WordScreen />
    </div>
  );
}
